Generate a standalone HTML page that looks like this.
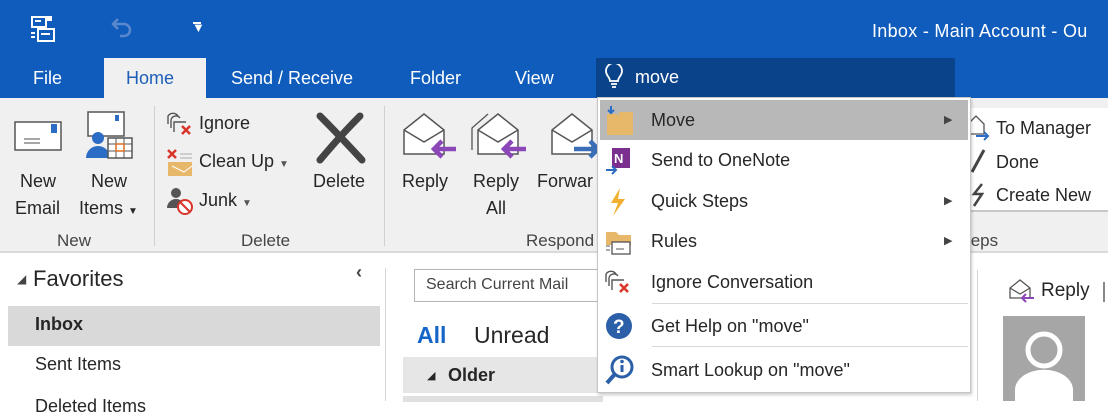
<!DOCTYPE html>
<html><head><meta charset="utf-8"><style>
*{margin:0;padding:0;box-sizing:border-box}
body{width:1108px;height:401px;overflow:hidden;position:relative;background:#fff;font-family:"Liberation Sans",sans-serif;color:#262626}
.a{position:absolute;white-space:nowrap}
.t{font-size:18px}
.w{color:#fff}
.g{color:#444}
</style></head><body>
<div class="a" style="left:0;top:0;width:1108px;height:98px;background:#0f5cbc"></div>
<svg class="a" style="left:28px;top:14px" width="30" height="30" viewBox="0 0 30 30" fill="none" stroke="#fff" stroke-width="2"><rect x="4" y="3" width="14" height="10"/><rect x="10" y="15" width="16" height="12"/><path d="M7 7h6M13 20h9M3 19h4M3 23h4"/><rect x="20" y="3" width="3" height="3" fill="#fff"/></svg>
<svg class="a" style="left:108px;top:14px" width="26" height="26" viewBox="0 0 26 26" fill="none" stroke="#5a88cc" stroke-width="2.5"><path d="M6 10h10a6 6 0 0 1 0 12h-4M10 5L5 10l5 5"/></svg>
<div class="a w" style="left:192px;top:20px;font-size:13px">&#9660;</div>
<div class="a" style="left:193px;top:22px;width:8px;height:2px;background:#fff"></div>
<div class="a w t" style="left:872px;top:21px;letter-spacing:0.3px">Inbox - Main Account - Ou</div>
<div class="a w t" style="left:33px;top:68px">File</div>
<div class="a" style="left:104px;top:58px;width:102px;height:42px;background:#f0f0f0"></div>
<div class="a t" style="left:126px;top:68px;color:#1d5fb8">Home</div>
<div class="a w t" style="left:231px;top:68px">Send / Receive</div>
<div class="a w t" style="left:410px;top:68px">Folder</div>
<div class="a w t" style="left:515px;top:68px">View</div>
<div class="a" style="left:596px;top:58px;width:359px;height:40px;background:#0a438a"></div>
<svg class="a" style="left:604px;top:64px" width="20" height="26" viewBox="0 0 20 26" fill="none" stroke="#fff" stroke-width="1.8"><path d="M6 17c0-4-4-5-4-10a8 8 0 0 1 16 0c0 5-4 6-4 10zM7 20h6M8 23h4"/></svg>
<div class="a w t" style="left:635px;top:67px">move</div>
<div class="a" style="left:0;top:98px;width:1108px;height:155px;background:#f0f0f0;border-bottom:2px solid #dadada"></div>
<div class="a" style="left:154px;top:106px;width:1px;height:140px;background:#d0d0d0"></div>
<div class="a" style="left:384px;top:106px;width:1px;height:140px;background:#d0d0d0"></div>
<svg class="a" style="left:14px;top:118px" width="50" height="36" viewBox="0 0 50 36"><rect x="1" y="4" width="46" height="28" fill="#fff" stroke="#555" stroke-width="1.5"/><rect x="37" y="6" width="6" height="9" fill="#2b6cc4"/><path d="M10 21h16M10 25h16" stroke="#888" stroke-width="1.5"/></svg>
<svg class="a" style="left:84px;top:110px" width="50" height="52" viewBox="0 0 50 52"><rect x="4" y="2" width="36" height="24" fill="#fff" stroke="#555" stroke-width="1.5"/><rect x="31" y="5" width="4" height="6" fill="#2b6cc4"/><circle cx="14" cy="28" r="6" fill="#2b6cc4"/><path d="M2 48a12 12 0 0 1 24 0z" fill="#2b6cc4"/><rect x="24" y="28" width="24" height="20" fill="#fff" stroke="#555" stroke-width="1.5"/><path d="M24 34h24M24 41h24M32 28v20M40 28v20" stroke="#555"/><rect x="32" y="34" width="8" height="7" fill="none" stroke="#e07020" stroke-width="1.5"/></svg>
<div class="a t" style="left:20px;top:171px">New</div>
<div class="a t" style="left:15px;top:198px">Email</div>
<div class="a t" style="left:91px;top:171px">New</div>
<div class="a t" style="left:79px;top:198px">Items <span style="font-size:10px">&#9660;</span></div>
<div class="a t g" style="left:57px;top:231px;font-size:17px">New</div>
<svg class="a" style="left:166px;top:110px" width="30" height="28" viewBox="0 0 30 28" fill="none" stroke="#555" stroke-width="1.4"><path d="M2 14V6a6 6 0 0 1 10 0M5 18v-8a5 5 0 0 1 9-2M8 22V12h12"/><path d="M16 16l8 8M24 16l-8 8" stroke="#d9342b" stroke-width="2.5"/></svg>
<div class="a t" style="left:199px;top:113px">Ignore</div>
<svg class="a" style="left:164px;top:146px" width="32" height="32" viewBox="0 0 32 32"><path d="M4 4l8 8M12 4l-8 8" stroke="#d9342b" stroke-width="2.5"/><rect x="4" y="16" width="24" height="14" fill="#e8b86a"/><path d="M8 20l12 6l8-6" stroke="#fff" fill="none"/><path d="M16 8h12M16 12h12" stroke="#aaa"/></svg>
<div class="a t" style="left:199px;top:151px">Clean Up <span style="font-size:10px;color:#555">&#9660;</span></div>
<svg class="a" style="left:166px;top:186px" width="30" height="30" viewBox="0 0 30 30"><circle cx="10" cy="7" r="5" fill="#555"/><path d="M1 22a9 9 0 0 1 18 0z" fill="#555"/><circle cx="19" cy="21" r="7" fill="#fff" stroke="#d9342b" stroke-width="2"/><path d="M14 16l10 10" stroke="#d9342b" stroke-width="2"/></svg>
<div class="a t" style="left:199px;top:190px">Junk <span style="font-size:10px;color:#555">&#9660;</span></div>
<svg class="a" style="left:314px;top:112px" width="54" height="52" viewBox="0 0 54 52"><path d="M6 4Q24 22 48 48M46 4Q26 24 6 48" stroke="#444" stroke-width="7" fill="none" stroke-linecap="round"/></svg>
<div class="a t" style="left:313px;top:171px">Delete</div>
<div class="a t g" style="left:241px;top:231px;font-size:17px">Delete</div>
<svg class="a" style="left:402px;top:110px" width="56" height="52" viewBox="0 0 56 52"><path d="M2 20L22 4l20 16v24H2z" fill="#fff" stroke="#555" stroke-width="1.5"/><path d="M2 20l20 12l20-12" fill="none" stroke="#555" stroke-width="1.5"/><path d="M54 39H32M40 31l-8 8l8 8" stroke="#8b47b8" stroke-width="4.5" fill="none"/></svg>
<div class="a t" style="left:402px;top:171px">Reply</div>
<svg class="a" style="left:470px;top:106px" width="56" height="56" viewBox="0 0 56 56"><path d="M2 44V22L18 8" fill="none" stroke="#555" stroke-width="1.3"/><path d="M8 24L28 8l20 16v24H8z" fill="#fff" stroke="#555" stroke-width="1.5"/><path d="M8 24l20 12l20-12" fill="none" stroke="#555" stroke-width="1.5"/><path d="M56 43H34M42 35l-8 8l8 8" stroke="#8b47b8" stroke-width="4.5" fill="none"/></svg>
<div class="a t" style="left:473px;top:171px">Reply</div>
<div class="a t" style="left:486px;top:198px">All</div>
<svg class="a" style="left:550px;top:110px" width="50" height="52" viewBox="0 0 50 52"><path d="M2 20L22 4l20 16v24H2z" fill="#fff" stroke="#555" stroke-width="1.5"/><path d="M2 20l20 12l20-12" fill="none" stroke="#555" stroke-width="1.5"/><path d="M24 39H48M40 31l8 8l-8 8" stroke="#3a6fb8" stroke-width="4.5" fill="none"/></svg>
<div class="a t" style="left:537px;top:171px">Forwar</div>
<div class="a t g" style="left:526px;top:231px;font-size:17px">Respond</div>
<div class="a" style="left:965px;top:108px;width:143px;height:104px;background:#fff;border-bottom:2px solid #c8c8c8"></div>
<svg class="a" style="left:966px;top:112px" width="26" height="32" viewBox="0 0 26 32" fill="none"><path d="M2 12l8-8l8 8v10H2z" stroke="#555" stroke-width="1.3"/><path d="M10 24h12M18 20l4 4l-4 4" stroke="#2b6cc4" stroke-width="2"/></svg>
<div class="a t" style="left:996px;top:118px">To Manager</div>
<svg class="a" style="left:968px;top:148px" width="20" height="26" viewBox="0 0 20 26"><path d="M16 2L4 24" stroke="#444" stroke-width="3"/></svg>
<div class="a t" style="left:996px;top:152px">Done</div>
<svg class="a" style="left:968px;top:182px" width="20" height="26" viewBox="0 0 20 26"><path d="M14 2L6 12h8L6 24" stroke="#444" stroke-width="2.5" fill="none"/></svg>
<div class="a t" style="left:996px;top:185px">Create New</div>
<div class="a t g" style="left:966px;top:231px;font-size:17px">teps</div>
<div class="a" style="left:17px;top:272px;font-size:12px;color:#444">&#9698;</div>
<div class="a" style="left:33px;top:266px;font-size:22px">Favorites</div>
<div class="a" style="left:356px;top:262px;font-size:18px;font-weight:bold;color:#444">&#8249;</div>
<div class="a" style="left:8px;top:306px;width:372px;height:40px;background:#d9d9d9"></div>
<div class="a t" style="left:35px;top:314px;font-weight:bold">Inbox</div>
<div class="a t" style="left:35px;top:354px">Sent Items</div>
<div class="a t" style="left:35px;top:396px">Deleted Items</div>
<div class="a" style="left:385px;top:268px;width:1px;height:133px;background:#d5d5d5"></div>
<div class="a" style="left:414px;top:269px;width:190px;height:33px;border:1px solid #b5b5b5;background:#fff"></div>
<div class="a" style="left:426px;top:276px;font-size:16px;color:#444">Search Current Mail</div>
<div class="a" style="left:417px;top:322px;font-size:23px;font-weight:bold;color:#1566c8">All</div>
<div class="a" style="left:474px;top:322px;font-size:23px">Unread</div>
<div class="a" style="left:403px;top:357px;width:200px;height:36px;background:#e6e6e6"></div>
<div class="a" style="left:427px;top:369px;font-size:11px">&#9698;</div>
<div class="a t" style="left:448px;top:365px;font-weight:bold">Older</div>
<div class="a" style="left:403px;top:396px;width:200px;height:6px;background:#e0e0e0"></div>
<div class="a" style="left:977px;top:270px;width:1px;height:131px;background:#d5d5d5"></div>
<svg class="a" style="left:1008px;top:278px" width="28" height="26" viewBox="0 0 28 26" fill="none"><path d="M2 10l10-8l10 8v10H2z" stroke="#555" stroke-width="1.3"/><path d="M2 10l10 6l10-6" stroke="#555" stroke-width="1.3"/><path d="M26 20H14M18 16l-4 4l4 4" stroke="#8b47b8" stroke-width="2"/></svg>
<div class="a" style="left:1041px;top:280px;font-size:19px">Reply</div>
<div class="a" style="left:1103px;top:282px;width:2px;height:20px;background:#888"></div>
<div class="a" style="left:1003px;top:316px;width:82px;height:85px;background:#a6a6a6;overflow:hidden"><svg width="82" height="85" viewBox="0 0 82 85"><circle cx="41" cy="34" r="16" fill="none" stroke="#fff" stroke-width="5"/><path d="M12 90V74a20 14 0 0 1 58 0v16" fill="#fff"/></svg></div>
<div class="a" style="left:597px;top:97px;width:374px;height:296px;background:#fff;border:1px solid #c6c6c6;box-shadow:1px 2px 3px rgba(0,0,0,.2)"></div>
<div class="a" style="left:600px;top:100px;width:368px;height:40px;background:#b8b8b8"></div>
<svg class="a" style="left:605px;top:104px" width="30" height="32" viewBox="0 0 30 32"><path d="M2 10h10l3 3h13v18H2z" fill="#e8b86a"/><rect x="14" y="8" width="14" height="5" fill="#e8b86a"/><path d="M6 2v7M3 6l3 3l3-3" stroke="#2b6cc4" stroke-width="2" fill="none"/></svg>
<div class="a t" style="left:651px;top:110px">Move</div>
<div class="a" style="left:944px;top:113px;font-size:11px;color:#444">&#9654;</div>
<svg class="a" style="left:604px;top:146px" width="30" height="30" viewBox="0 0 30 30"><rect x="8" y="2" width="18" height="20" fill="#7b2f8e"/><text x="10" y="17" font-size="13" font-family="Liberation Sans" font-weight="bold" fill="#fff">N</text><path d="M2 24h10M8 20l4 4l-4 4" stroke="#2b6cc4" stroke-width="2" fill="none"/></svg>
<div class="a t" style="left:651px;top:150px">Send to OneNote</div>
<svg class="a" style="left:608px;top:187px" width="20" height="30" viewBox="0 0 20 30"><path d="M12 1L3 16h7L5 29l12-17h-7z" fill="#f0b030"/></svg>
<div class="a t" style="left:651px;top:191px">Quick Steps</div>
<div class="a" style="left:944px;top:194px;font-size:11px;color:#444">&#9654;</div>
<svg class="a" style="left:604px;top:228px" width="30" height="28" viewBox="0 0 30 28"><path d="M2 4h10l3 3h12v10H2z" fill="#e8b86a"/><rect x="8" y="14" width="18" height="12" fill="#fff" stroke="#555" stroke-width="1.3"/><path d="M12 21h8M2 18h4M2 22h4" stroke="#555"/></svg>
<div class="a t" style="left:651px;top:231px">Rules</div>
<div class="a" style="left:944px;top:234px;font-size:11px;color:#444">&#9654;</div>
<svg class="a" style="left:604px;top:268px" width="30" height="28" viewBox="0 0 30 28" fill="none" stroke="#555" stroke-width="1.4"><path d="M2 14V6a6 6 0 0 1 10 0M5 18v-8a5 5 0 0 1 9-2M8 22V12h12"/><path d="M16 16l8 8M24 16l-8 8" stroke="#d9342b" stroke-width="2.5"/></svg>
<div class="a t" style="left:651px;top:272px">Ignore Conversation</div>
<div class="a" style="left:652px;top:303px;width:316px;height:1px;background:#d8d8d8"></div>
<svg class="a" style="left:605px;top:312px" width="28" height="28" viewBox="0 0 28 28"><circle cx="14" cy="14" r="13" fill="#2b5fa8"/><text x="8" y="21" font-size="19" font-weight="bold" font-family="Liberation Sans" fill="#fff">?</text></svg>
<div class="a t" style="left:651px;top:316px">Get Help on "move"</div>
<div class="a" style="left:652px;top:346px;width:316px;height:1px;background:#d8d8d8"></div>
<svg class="a" style="left:605px;top:355px" width="30" height="30" viewBox="0 0 30 30"><circle cx="17" cy="12" r="10" fill="none" stroke="#2b5fa8" stroke-width="3"/><path d="M10 19L2 28" stroke="#2b5fa8" stroke-width="4"/><rect x="15.5" y="10" width="3" height="7" fill="#2b5fa8"/><circle cx="17" cy="6.5" r="1.8" fill="#2b5fa8"/></svg>
<div class="a t" style="left:651px;top:360px">Smart Lookup on "move"</div>
</body></html>
